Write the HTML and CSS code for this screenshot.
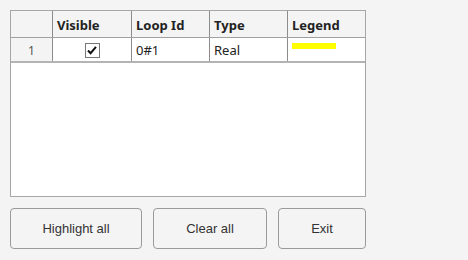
FILE: index.html
```html
<!DOCTYPE html>
<html lang="en">
<head>
    <meta charset="UTF-8">
    <title>Loops</title>
    <link rel="stylesheet" href="styles.css">
</head>
<body>
    <div class="panel">
        <!-- Tabulka smyček -->
        <div class="table">
            <div class="row head">
                <div class="cell idx"></div>
                <div class="cell">Visible</div>
                <div class="cell">Loop Id</div>
                <div class="cell">Type</div>
                <div class="cell last">Legend</div>
            </div>
            <div class="row data">
                <div class="cell idx">1</div>
                <div class="cell center"><span class="check">
                    <svg width="12" height="12" viewBox="0 0 12 12"><path d="M2 6.5 L4.6 9.2 L10 2.8" fill="none" stroke="#111" stroke-width="2"/></svg>
                </span></div>
                <div class="cell">0#1</div>
                <div class="cell">Real</div>
                <div class="cell last"><span class="swatch"></span></div>
            </div>
        </div>

        <!-- Tlačítka -->
        <div class="buttons">
            <button class="btn wide">Highlight all</button>
            <button class="btn mid">Clear all</button>
            <button class="btn small">Exit</button>
        </div>
    </div>
</body>
</html>
```

FILE: styles.css
```css
body, html {
    margin: 0;
    padding: 0;
    background-color: #f4f4f4;
    font-family: 'Noto Sans', sans-serif;
    font-size: 13px;
    color: #222;
}
.panel {
    padding: 10px;
    width: 356px;
}
.table {
    height: 185px;
    border: 1px solid #a6a6a6;
    background-color: #fff;
}
.row {
    display: grid;
    grid-template-columns: 42px 79px 78px 78px 77px;
}
.head {
    height: 26px;
    background-color: #f4f4f4;
    border-bottom: 1px solid #a0a0a0;
    font-weight: bold;
}
.head .cell { padding-top: 2px; }
.data {
    height: 23px;
    border-bottom: 2px solid #b4b4b4;
}
.data .cell { padding-top: 1px; }
.cell {
    border-right: 1px solid #8c8c8c;
    padding: 0 4px;
    display: flex;
    align-items: center;
    white-space: nowrap;
}
.cell.last { border-right: none; }
.cell.idx {
    background-color: #f4f4f4;
    justify-content: center;
    color: #555;
    font-size: 12px;
}
.cell.center { justify-content: center; }
.check {
    width: 13px;
    height: 13px;
    border: 1px solid #777;
    background-color: #fff;
    display: flex;
    align-items: center;
    justify-content: center;
}
.swatch {
    align-self: flex-start;
    margin-top: 4px;
    width: 44px;
    height: 6px;
    background-color: #ffff00;
}
.buttons {
    display: flex;
    gap: 11px;
    margin-top: 11px;
}
.btn {
    height: 41px;
    border: 1px solid #9a9a9a;
    border-radius: 4px;
    background-color: #f4f4f4;
    font-family: 'Liberation Sans', sans-serif;
    font-size: 13px;
    color: #333;
    padding: 0;
}
.btn.wide { width: 132px; }
.btn.mid { width: 114px; }
.btn.small { width: 88px; }
```
